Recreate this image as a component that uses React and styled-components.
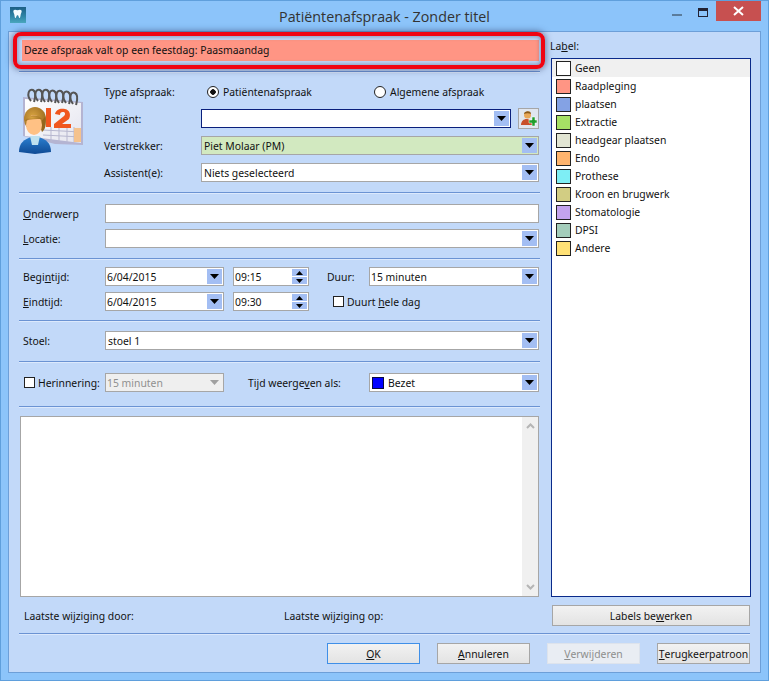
import React from "react";
import styled, { createGlobalStyle } from "styled-components";

const labels = [
  ["Geen", "#ffffff"],
  ["Raadpleging", "#ff9584"],
  ["plaatsen", "#84a2e4"],
  ["Extractie", "#a6e065"],
  ["headgear plaatsen", "#e2e5d3"],
  ["Endo", "#ffb46e"],
  ["Prothese", "#7eeef5"],
  ["Kroon en brugwerk", "#d2cd83"],
  ["Stomatologie", "#c3a3ee"],
  ["DPSI", "#a4cdbb"],
  ["Andere", "#ffe176"],
];

function Key({ children }) {
  return <u>{children}</u>;
}

function Arrow({ disabled }) {
  return (
    <svg width="9" height="5" viewBox="0 0 9 5">
      <path d="M0 0h9L4.5 5z" fill={disabled ? "#a0a0a0" : "#000"} />
    </svg>
  );
}

function Select({ children, $width, $green, $focus, $flush, disabled }) {
  return (
    <SelectBox $width={$width} $green={$green} $focus={$focus} $disabled={disabled}>
      <SelectText $flush={$flush}>{children}</SelectText>
      <ArrowBlock $disabled={disabled}>
        <Arrow disabled={disabled} />
      </ArrowBlock>
    </SelectBox>
  );
}

function ToothIcon() {
  return (
    <svg width="16" height="16" viewBox="0 0 16 16">
      <defs>
        <linearGradient id="tb" x1="0" y1="0" x2="0" y2="1">
          <stop offset="0" stopColor="#1c5f86" />
          <stop offset="0.6" stopColor="#2f86a8" />
          <stop offset="1" stopColor="#4aa7bd" />
        </linearGradient>
      </defs>
      <rect width="16" height="16" fill="url(#tb)" />
      <path
        d="M3.500 3.500C4.500 2.200 6 3 7.500 3.200c1.500-.2 3-1 4 .3.600 1.500-.5 2.800-.8 4-.3 1.500-.4 3.500-1.200 3.500-.8 0-.6-2.800-2-2.800s-1.200 2.800-2 2.800c-.8 0-.9-2-1.200-3.500-.3-1.200-1.400-2.500-.8-4z"
        fill="#f4fbff"
      />
    </svg>
  );
}

function AppointmentIcon() {
  return (
    <svg width="66" height="68" viewBox="0 0 66 68">
      <defs>
        <linearGradient id="page" x1="0" y1="0" x2="1" y2="1">
          <stop offset="0" stopColor="#ffffff" />
          <stop offset="1" stopColor="#e4e4ee" />
        </linearGradient>
        <linearGradient id="coat" x1="0" y1="0" x2="0" y2="1">
          <stop offset="0" stopColor="#2b7fd0" />
          <stop offset="1" stopColor="#0f4a94" />
        </linearGradient>
        <radialGradient id="hair" cx="0.4" cy="0.4" r="0.7">
          <stop offset="0" stopColor="#d9a441" />
          <stop offset="1" stopColor="#94661c" />
        </radialGradient>
      </defs>
      <path d="M4 11 64 16 64 59 36 58 4 50z" fill="#b4b4d2" />
      <path d="M6 13 62 17 62 57 6 50z" fill="url(#page)" />
      <path d="M24 44 62 46M24 49 62 51M32 41V56M40 41V56M48 41V56M55 41V56" fill="none" stroke="#b7b7cf" />
      <rect x="55" y="42" width="7" height="14" fill="#f4c28e" />
      <g fill="none" stroke="#555" strokeWidth="2">
        <path d="M12 15C7 9 10 2 14 4s2 8 1 12" />
        <path d="M19 15C14 9 17 2 21 4s2 8 1 12" />
        <path d="M26 16C21 9 24 2 28 4s2 8 1 12" />
        <path d="M33 16C28 9 31 3 35 5s2 8 1 12" />
        <path d="M40 17C35 10 38 3 42 5s2 8 1 12" />
        <path d="M47 17C42 10 45 4 49 6s2 8 1 12" />
        <path d="M54 18C49 11 52 5 56 7s2 8 1 12" />
      </g>
      <path d="M27 22h5v19h-5z" fill="#f0561e" />
      <path
        d="M36 28c1-5 6-6 10-5 5 1 6 6 4 10l-7 5h9v4H35v-4l10-8c2-2 1-4-1-4-2-.2-3 1-3 3z"
        fill="#f0561e"
      />
      <path d="M0 66c0-9 5-13 13-15h6c8 2 13 6 13 15l-16 2z" fill="url(#coat)" />
      <path d="M11 50h10l-2 9h-6z" fill="#bfe1ef" />
      <ellipse cx="16" cy="33" rx="11" ry="12" fill="url(#hair)" />
      <path d="M26 31c2 7 0 13-3 15l-3-8z" fill="#94661c" />
      <ellipse cx="15" cy="39" rx="8" ry="10" fill="#ffc184" />
      <path d="M6 35c3-6 12-8 17-2-6 0-12 0-17 2z" fill="url(#hair)" />
    </svg>
  );
}

function AddPersonIcon() {
  return (
    <svg width="17" height="17" viewBox="0 0 17 17">
      <circle cx="7.500" cy="5" r="3.500" fill="#e8a858" />
      <path d="M4 4c0-3 7-4 7 0-2-1-5-1-7 0z" fill="#8a5a1a" />
      <path d="M1 15c0-4 3-6 5.500-6S12 11 12 15z" fill="#c8502a" />
      <path d="M9 10h3V7h3v3h2v3h-2v3h-3v-3H9z" fill="#1f9e2c" stroke="#fff" strokeWidth=".5" />
    </svg>
  );
}

function Spinner() {
  return (
    <SpinnerBox>
      <SpinButton>
        <svg width="7" height="4" viewBox="0 0 7 4">
          <path d="M0 4h7L3.500 0z" fill="#000" />
        </svg>
      </SpinButton>
      <SpinButton>
        <svg width="7" height="4" viewBox="0 0 7 4">
          <path d="M0 0h7L3.500 4z" fill="#000" />
        </svg>
      </SpinButton>
    </SpinnerBox>
  );
}

export default function App() {
  return (
    <>
      <GlobalStyle />
      <Window>
        <TitleBar>
          <TitleIcon>
            <ToothIcon />
          </TitleIcon>
          <Title>Patiëntenafspraak - Zonder titel</Title>
          <Controls>
            <Minimize />
            <Maximize />
            <Close>
              <svg width="11" height="10" viewBox="0 0 11 10">
                <path d="M1 1l9 8M10 1l-9 8" stroke="#fff" strokeWidth="2" />
              </svg>
            </Close>
          </Controls>
        </TitleBar>
        <Panel>
          <Main>
            <LeftColumn>
              <Banner>
                Deze afspraak valt op een feestdag: Paasmaandag
                <Highlight />
              </Banner>
              <Divider $top={10} />
              <Patient>
                <IconCell>
                  <AppointmentIcon />
                </IconCell>
                <PatientFields>
                  <Row>
                    <TopLabel>Type afspraak:</TopLabel>
                    <Radio $width={161}>
                      <RadioDot $checked />
                      Patiëntenafspraak
                    </Radio>
                    <Radio>
                      <RadioDot />
                      Algemene afspraak
                    </Radio>
                  </Row>
                  <Row>
                    <TopLabel>Patiënt:</TopLabel>
                    <Select $width={310} $focus />
                    <SmallButton>
                      <AddPersonIcon />
                    </SmallButton>
                  </Row>
                  <Row>
                    <TopLabel>Verstrekker:</TopLabel>
                    <Select $width={338} $green>
                      Piet Molaar (PM)
                    </Select>
                  </Row>
                  <Row>
                    <TopLabel>Assistent(e):</TopLabel>
                    <Select $width={338}>Niets geselecteerd</Select>
                  </Row>
                </PatientFields>
              </Patient>
              <Divider $top={10} />
              <Fields $top={10}>
                <Row>
                  <FieldLabel>
                    <Key>O</Key>nderwerp
                  </FieldLabel>
                  <TextInput />
                </Row>
                <Row>
                  <FieldLabel>
                    <Key>L</Key>ocatie:
                  </FieldLabel>
                  <Select $width={434} />
                </Row>
              </Fields>
              <Divider $top={10} />
              <Fields $top={7}>
                <Row>
                  <FieldLabel>
                    Begi<Key>n</Key>tijd:
                  </FieldLabel>
                  <Select $width={119} $flush>6/04/2015</Select>
                  <TimeInput>
                    09:15
                    <Spinner />
                  </TimeInput>
                  <DurationLabel>Duur:</DurationLabel>
                  <Select $width={170} $flush>15 minuten</Select>
                </Row>
                <Row>
                  <FieldLabel>
                    <Key>E</Key>indtijd:
                  </FieldLabel>
                  <Select $width={119} $flush>6/04/2015</Select>
                  <TimeInput>
                    09:30
                    <Spinner />
                  </TimeInput>
                  <AllDay>
                    <CheckBox />
                    <span>
                      Duurt <Key>h</Key>ele dag
                    </span>
                  </AllDay>
                </Row>
              </Fields>
              <Divider $top={9} />
              <Fields $top={9}>
                <Row>
                  <FieldLabel>Stoel:</FieldLabel>
                  <Select $width={434}>stoel 1</Select>
                </Row>
              </Fields>
              <Divider $top={11} />
              <Fields $top={10}>
                <Row>
                  <Reminder>
                    <CheckBox />
                    Herinnering:
                  </Reminder>
                  <Select $width={119} $flush disabled>
                    15 minuten
                  </Select>
                  <ShowAs>
                    Tijd weerge<Key>v</Key>en als:
                  </ShowAs>
                  <Select $width={170}>
                    <Swatch $color="#0000ff" $small />
                    Bezet
                  </Select>
                </Row>
              </Fields>
              <Divider $top={14} />
              <Memo>
                <MemoScroll>
                  <svg width="9" height="6" viewBox="0 0 9 6">
                    <path d="M1 5l3.500-3.500L8 5" fill="none" stroke="#b5b5b5" strokeWidth="2" />
                  </svg>
                  <svg width="9" height="6" viewBox="0 0 9 6">
                    <path d="M1 1l3.500 3.500L8 1" fill="none" stroke="#b5b5b5" strokeWidth="2" />
                  </svg>
                </MemoScroll>
              </Memo>
            </LeftColumn>
            <RightColumn>
              <LabelCaption>
                La<Key>b</Key>el:
              </LabelCaption>
              <LabelList>
                {labels.map(([name, color], i) => (
                  <LabelRow key={name} $selected={i === 0}>
                    <Swatch $color={color} />
                    {name}
                  </LabelRow>
                ))}
              </LabelList>
            </RightColumn>
          </Main>
          <InfoRow>
            <ChangedBy>Laatste wijziging door:</ChangedBy>
            <span>Laatste wijziging op:</span>
            <EditLabels>
              Labels be<Key>w</Key>erken
            </EditLabels>
          </InfoRow>
          <Divider $top={7} />
          <Buttons>
            <Button $default>
              <Key>O</Key>K
            </Button>
            <Button>
              <Key>A</Key>nnuleren
            </Button>
            <Button disabled>
              <Key>V</Key>erwijderen
            </Button>
            <Button>
              <Key>T</Key>erugkeerpatroon
            </Button>
          </Buttons>
        </Panel>
      </Window>
    </>
  );
}

const GlobalStyle = createGlobalStyle`
  html, body {
    margin: 0;
    padding: 0;
    background: #8cc4fa;
  }
  body {
    font-family: "Noto Sans", "Open Sans", sans-serif;
    font-size: 10.4px;
    color: #111;
  }
`;

const Window = styled.div`
  width: 769px;
  height: 681px;
  box-sizing: border-box;
  display: flex;
  flex-direction: column;
  background: #8cc4fa;
  border: 1px solid #5f9fdc;
  padding: 0 7px 7px;
`;

const TitleBar = styled.div`
  height: 30px;
  flex: none;
  display: grid;
  grid-template-columns: 1fr auto 1fr;
  align-items: center;
`;

const TitleIcon = styled.div`
  display: flex;
  padding: 0 0 2px 2px;
`;

const Title = styled.div`
  font-family: "Open Sans", "Noto Sans", sans-serif;
  font-size: 14.3px;
  color: #333;
`;

const Controls = styled.div`
  display: flex;
  justify-content: flex-end;
  align-self: start;
`;

const Minimize = styled.div`
  width: 10px;
  height: 2px;
  background: #5a7c9c;
  margin: 13px 16px 0 0;
`;

const Maximize = styled.div`
  width: 8px;
  height: 5px;
  border: 1px solid #223;
  border-top-width: 3px;
  margin: 7px 8px 0 0;
`;

const Close = styled.div`
  width: 45px;
  height: 20px;
  background: #c75050;
  display: flex;
  align-items: center;
  justify-content: center;
`;

const Panel = styled.div`
  flex: 1;
  display: flex;
  flex-direction: column;
  background: #c2d9f9;
  border: 1px solid #6d9fd8;
  padding: 0 10px;
`;

const Main = styled.div`
  display: flex;
  justify-content: space-between;
`;

const LeftColumn = styled.div`
  width: 521px;
  padding-top: 8px;
`;

const RightColumn = styled.div`
  width: 200px;
  margin-right: -1px;
`;

const Banner = styled.div`
  position: relative;
  height: 21px;
  margin: 0 1px 0 3px;
  padding-left: 2px;
  line-height: 21px;
  background: #ff9584;
`;

const Highlight = styled.div`
  position: absolute;
  inset: -8px -6px -8px -9px;
  border: 4px solid #f00412;
  border-radius: 8px;
  box-shadow: 0 0 6px 1px rgba(40, 50, 90, 0.55), inset 0 0 4px 1px rgba(40, 50, 90, 0.4);
`;

const Divider = styled.div`
  height: 1px;
  margin-top: ${(p) => p.$top}px;
  background: #6b93d3;
  border-bottom: 1px solid #dce9fc;
`;

const Patient = styled.div`
  display: flex;
  padding-top: 9px;
`;

const IconCell = styled.div`
  width: 85px;
  flex: none;
  padding-top: 4px;
`;

const PatientFields = styled.div`
  display: flex;
  flex-direction: column;
  gap: 8px;
`;

const Fields = styled.div`
  display: flex;
  flex-direction: column;
  gap: 6px;
  padding-top: ${(p) => p.$top}px;
`;

const Row = styled.div`
  height: 19px;
  display: flex;
  align-items: center;
`;

const TopLabel = styled.div`
  width: 97px;
  flex: none;
`;

const FieldLabel = styled.div`
  width: 82px;
  flex: none;
  padding-left: 4px;
  box-sizing: content-box;
`;

const Radio = styled.div`
  display: flex;
  align-items: center;
  gap: 4px;
  margin-left: 6px;
  width: ${(p) => (p.$width ? `${p.$width}px` : "auto")};
  box-sizing: border-box;
`;

const RadioDot = styled.span`
  width: 12px;
  height: 12px;
  box-sizing: border-box;
  border: 1px solid #222;
  border-radius: 50%;
  background: ${(p) =>
    p.$checked ? "radial-gradient(circle, #111 0 2.5px, #fff 3px)" : "#fff"};
`;

const SelectBox = styled.div`
  width: ${(p) => p.$width}px;
  height: 19px;
  flex: none;
  box-sizing: border-box;
  display: flex;
  align-items: center;
  justify-content: space-between;
  padding: 1px;
  background: ${(p) => (p.$green ? "#d2e9c0" : p.$disabled ? "#efefef" : "#fff")};
  color: ${(p) => (p.$disabled ? "#8f8f8f" : "#111")};
  border: 1px solid ${(p) => (p.$focus ? "#0a1f7c" : "#a6a6a6")};
`;

const SelectText = styled.div`
  display: flex;
  align-items: center;
  gap: 4px;
  padding-left: ${(p) => (p.$flush ? 0 : 1)}px;
  white-space: nowrap;
`;

const ArrowBlock = styled.div`
  width: 15px;
  height: 15px;
  flex: none;
  display: flex;
  align-items: center;
  justify-content: center;
  background: ${(p) => (p.$disabled ? "transparent" : "#a3bef3")};
`;

const SmallButton = styled.div`
  width: 21px;
  height: 21px;
  margin-left: 7px;
  flex: none;
  box-sizing: border-box;
  display: flex;
  align-items: center;
  justify-content: center;
  background: #e0e6ef;
  border: 1px solid #a6a6a6;
`;

const TextInput = styled.div`
  width: 434px;
  height: 19px;
  box-sizing: border-box;
  background: #fff;
  border: 1px solid #a6a6a6;
`;

const TimeInput = styled.div`
  width: 76px;
  height: 19px;
  flex: none;
  margin-left: 9px;
  box-sizing: border-box;
  display: flex;
  align-items: center;
  justify-content: space-between;
  padding-left: 1px;
  background: #fff;
  border: 1px solid #a6a6a6;
`;

const SpinnerBox = styled.div`
  display: flex;
  flex-direction: column;
  gap: 1px;
  padding: 1px;
`;

const SpinButton = styled.div`
  width: 15px;
  height: 7px;
  display: flex;
  align-items: center;
  justify-content: center;
  background: #a3bef3;
`;

const DurationLabel = styled.div`
  width: 42px;
  margin-left: 18px;
  flex: none;
`;

const AllDay = styled.div`
  display: flex;
  align-items: center;
  gap: 3px;
  margin-left: 24px;
`;

const CheckBox = styled.span`
  width: 11px;
  height: 11px;
  flex: none;
  box-sizing: border-box;
  background: #fff;
  border: 1px solid #222;
`;

const Reminder = styled.div`
  width: 86px;
  flex: none;
  display: flex;
  align-items: center;
  gap: 3px;
  padding-left: 5px;
  box-sizing: border-box;
`;

const ShowAs = styled.div`
  width: 121px;
  flex: none;
  margin-left: 24px;
`;

const Memo = styled.div`
  height: 181px;
  margin: 8px 1px 0;
  box-sizing: border-box;
  display: flex;
  justify-content: flex-end;
  background: #fff;
  border: 1px solid #a6a6a6;
`;

const MemoScroll = styled.div`
  width: 16px;
  display: flex;
  flex-direction: column;
  align-items: center;
  justify-content: space-between;
  padding: 6px 0;
  background: #f0f0f0;
`;

const LabelCaption = styled.div`
  height: 26px;
  line-height: 14px;
  padding: 7px 0 0;
  box-sizing: border-box;
  margin-left: -1px;
`;

const LabelList = styled.div`
  height: 539px;
  box-sizing: border-box;
  background: #fff;
  border: 1px solid #0a2a8a;
`;

const LabelRow = styled.div`
  height: 18px;
  display: flex;
  align-items: center;
  gap: 4px;
  padding-left: 4px;
  background: ${(p) => (p.$selected ? "#f0f0f0" : "transparent")};
`;

const Swatch = styled.span`
  width: ${(p) => (p.$small ? 12 : 15)}px;
  height: ${(p) => (p.$small ? 12 : 15)}px;
  flex: none;
  box-sizing: border-box;
  border: 1px solid ${(p) => (p.$small ? "#0a0a40" : "#222")};
  background: ${(p) => p.$color};
`;

const InfoRow = styled.div`
  height: 21px;
  margin-top: 8px;
  display: flex;
  align-items: center;
  padding-left: 5px;
`;

const ChangedBy = styled.span`
  width: 260px;
`;

const EditLabels = styled.div`
  width: 198px;
  height: 21px;
  margin-left: auto;
  box-sizing: border-box;
  display: flex;
  align-items: center;
  justify-content: center;
  white-space: pre;
  background: linear-gradient(#f2f2f2, #e3e3e3);
  border: 1px solid #a6a6a6;
`;

const Buttons = styled.div`
  display: flex;
  justify-content: flex-end;
  gap: 17px;
  padding-top: 8px;
`;

const Button = styled.div`
  width: 93px;
  height: 21px;
  box-sizing: border-box;
  display: flex;
  align-items: center;
  justify-content: center;
  white-space: nowrap;
  background: ${(p) => (p.disabled ? "#e9edf3" : "linear-gradient(#f2f2f2, #e3e3e3)")};
  color: ${(p) => (p.disabled ? "#8d8d8d" : "#111")};
  border: 1px solid
    ${(p) => (p.$default ? "#3f8fe8" : p.disabled ? "#dde3ec" : "#a6a6a6")};
`;
